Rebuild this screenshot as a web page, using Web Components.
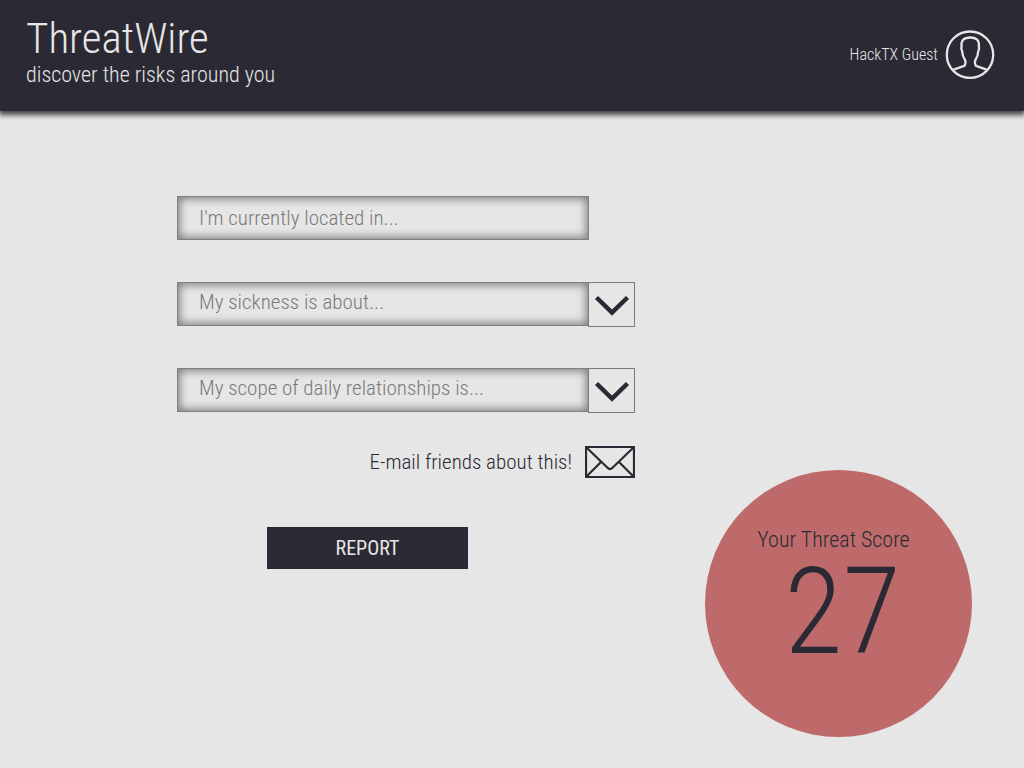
<!DOCTYPE html>
<html lang="en">
<head>
<meta charset="utf-8">
<meta name="viewport" content="width=device-width, initial-scale=1">
<title>ThreatWire</title>
<style>
  html, body { margin: 0; min-height: 100vh; }
  body {
    --ink: #2b2a34;
    --paper: #e6e6e6;
    --muted: #7a7a7a;
    --alert: #be6a6a;
    background: var(--paper);
    color: var(--ink);
    font: 300 22px/28px "Roboto Condensed", Roboto, "Liberation Sans", sans-serif;
  }
</style>
</head>
<body>
<threat-app></threat-app>

<script>
const define = (name, html) => {
  const template = document.createElement('template');
  template.innerHTML = html;
  customElements.define(name, class extends HTMLElement {
    constructor() {
      super();
      this.attachShadow({ mode: 'open' }).append(template.content.cloneNode(true));
    }
    connectedCallback() {
      const caption = this.getAttribute('placeholder');
      const input = this.shadowRoot.querySelector('input');
      const option = this.shadowRoot.querySelector('option');
      if (input && caption) { input.placeholder = caption; input.setAttribute('aria-label', caption); }
      if (option && caption) {
        option.textContent = caption;
        option.parentElement.setAttribute('aria-label', caption);
      }
    }
  });
};

define('user-badge', `
  <style>
    :host { display: flex; align-items: center; gap: 7px; font-size: 16px; line-height: 24px; }
    svg { display: block; }
  </style>
  <span><slot></slot></span>
  <svg width="50" height="50" viewBox="0 0 50 50" fill="none" stroke="currentColor" stroke-width="2.3" aria-hidden="true">
    <circle cx="25" cy="24.700" r="23.200"/>
    <path d="M8.500 39.700 L19.500 35.800 Q21.300 32.500 19.800 29.500 Q17.500 26.500 17.200 21.500 Q15.800 19.500 16.500 16.500 Q15.500 7.500 25.200 7.500 Q34.900 7.500 33.900 16.500 Q34.600 19.500 33.200 21.500 Q32.900 26.500 30.600 29.500 Q29.100 32.500 30.900 35.800 L41.500 39.700"/>
  </svg>`);

define('app-header', `
  <style>
    :host { display: block; position: relative; }
    header {
      display: flex; justify-content: space-between; align-items: center;
      box-sizing: border-box; min-height: 111px; padding: 0 29px 2px 26px;
      background: var(--ink); color: var(--paper);
      box-shadow: 0 3px 5px 1px rgba(0, 0, 0, .7);
    }
    h1 { margin: 0 0 1px; font-size: 43px; line-height: 48px; font-weight: inherit; }
    p { margin: 0 0 9px; line-height: 24px; }
  </style>
  <header>
    <div><h1><slot name="title"></slot></h1><p><slot name="tagline"></slot></p></div>
    <slot name="user"></slot>
  </header>`);

define('text-field', `
  <style>
    :host { display: block; padding-right: 46px; font-size: 21px; }
    input {
      display: block; box-sizing: border-box; width: 100%; height: 44px; padding: 0 21px;
      border: 1px solid #808080; border-radius: 0; outline: 0; background: transparent;
      box-shadow: inset 0 0 9px 2px rgba(0, 0, 0, .45);
      color: inherit; font: inherit;
    }
    input::placeholder { color: var(--muted); opacity: 1; }
  </style>
  <input type="text">`);

define('select-field', `
  <style>
    :host { display: grid; grid-template-columns: 1fr 47px; height: 45px; font-size: 21px; }
    .well {
      grid-area: 1 / 1; height: 44px; box-sizing: border-box; margin-right: -1px;
      border: 1px solid #808080; box-shadow: inset 0 0 9px 2px rgba(0, 0, 0, .45);
    }
    .arrow {
      grid-area: 1 / 2; display: grid; place-items: center; box-sizing: border-box;
      border: 1px solid #7a7a7a; background: var(--paper);
    }
    select {
      grid-area: 1 / 1 / 2 / 3; z-index: 1; box-sizing: border-box; width: 100%; height: 40px;
      padding: 0 69px 0 22px; border: 0; outline: 0; appearance: none;
      background: transparent; color: var(--muted); font: inherit;
    }
  </style>
  <span class="well"></span>
  <span class="arrow">
    <svg width="36" height="22" viewBox="0 0 36 22" fill="none" stroke="#2b2a34" stroke-width="4.500" aria-hidden="true">
      <path d="M2.500 3.500 L18 18.500 L33.500 3.500"/>
    </svg>
  </span>
  <select><option></option></select>`);

define('email-action', `
  <style>
    :host { display: flex; justify-content: flex-end; font-size: 21px; }
    button {
      display: flex; align-items: center; gap: 13px; padding: 0; border: 0;
      background: none; color: inherit; font: inherit; cursor: pointer;
    }
    svg { display: block; }
  </style>
  <button type="button">
    <slot></slot>
    <svg width="50" height="32" viewBox="0 0 50 32" fill="none" stroke="currentColor" stroke-width="2.200" aria-hidden="true">
      <path d="M1 1 H49 V31 H1 Z M1 1 L22.500 21.800 Q25 24.200 27.500 21.800 L49 1 M1 31 L16 16 M49 31 L34 16"/>
    </svg>
  </button>`);

define('report-button', `
  <style>
    :host { display: block; }
    button {
      width: 201px; height: 42px; padding: 0; border: 0; background: var(--ink);
      color: var(--paper); font: inherit; font-size: 20px; font-weight: 400; cursor: pointer;
    }
  </style>
  <button type="submit"><slot></slot></button>`);

define('threat-score', `
  <style>
    :host {
      display: flex; flex-direction: column; align-items: center; box-sizing: border-box;
      width: 267px; height: 267px; padding-top: 56px; border-radius: 50%; background: var(--alert);
    }
    .label { margin-right: 10px; }
    .value { font-size: 120px; line-height: 116px; margin-left: 8px; }
  </style>
  <span class="label"><slot></slot></span>
  <span class="value"><slot name="value"></slot></span>`);

define('threat-app', `
  <style>
    :host { display: flex; flex-direction: column; min-height: 100vh; }
    main {
      flex: 1; display: flex; flex-wrap: wrap; justify-content: space-between; gap: 40px;
      padding: 85px 52px 31px 177px;
    }
    form { display: flex; flex-direction: column; gap: 41px; flex: 0 1 458px; }
    text-field { margin-bottom: 1px; }
    email-action { margin-top: -8px; }
    report-button { margin: 8px 0 0 90px; }
    threat-score { align-self: flex-end; }
  </style>
  <app-header>
    <span slot="title">ThreatWire</span>
    <span slot="tagline">discover the risks around you</span>
    <user-badge slot="user">HackTX Guest</user-badge>
  </app-header>
  <main>
    <form>
      <text-field placeholder="I'm currently located in..."></text-field>
      <select-field placeholder="My sickness is about..."></select-field>
      <select-field placeholder="My scope of daily relationships is..."></select-field>
      <email-action>E-mail friends about this!</email-action>
      <report-button>REPORT</report-button>
    </form>
    <threat-score>Your Threat Score<span slot="value">27</span></threat-score>
  </main>`);
</script>
</body>
</html>
